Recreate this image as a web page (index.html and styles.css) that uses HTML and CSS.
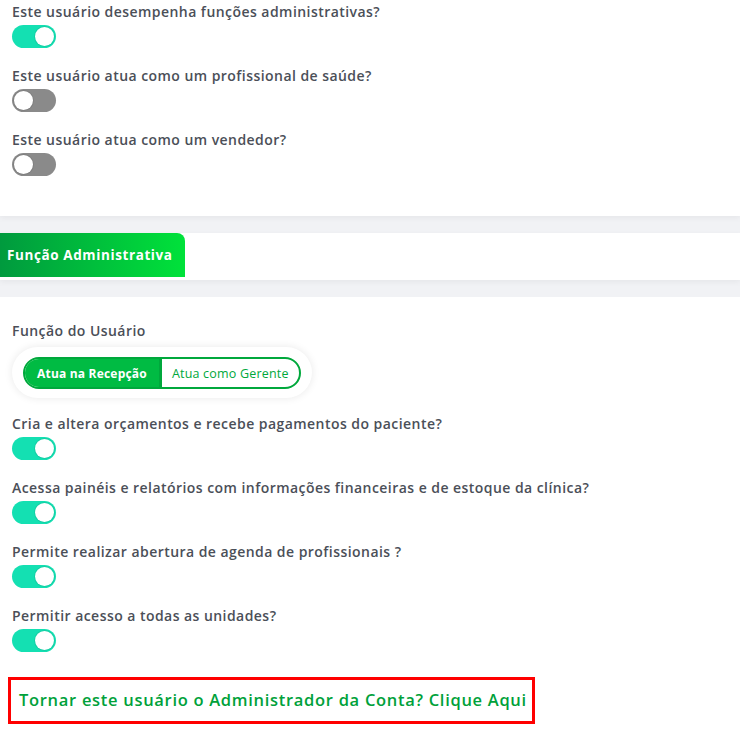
FILE: index.html
```html
<!DOCTYPE html>
<html lang="pt-BR">
<head>
  <meta charset="UTF-8" />
  <meta name="viewport" content="width=device-width, initial-scale=1.0"/>
  <title>Permissões do Usuário</title>
  <link rel="stylesheet" href="styles.css">
</head>
<body>
  <div class="card card-top">
    <div class="field">
      <div class="label">Este usuário desempenha funções administrativas?</div>
      <span class="switch on"></span>
    </div>
    <div class="field">
      <div class="label">Este usuário atua como um profissional de saúde?</div>
      <span class="switch"></span>
    </div>
    <div class="field">
      <div class="label">Este usuário atua como um vendedor?</div>
      <span class="switch"></span>
    </div>
  </div>

  <div class="tabbar">
    <div class="tab">Função Administrativa</div>
  </div>

  <div class="card card-main">
    <div class="label">Função do Usuário</div>
    <div class="segment-wrap">
      <div class="segment">
        <span class="seg active">Atua na Recepção</span>
        <span class="seg">Atua como Gerente</span>
      </div>
    </div>

    <div class="field">
      <div class="label">Cria e altera orçamentos e recebe pagamentos do paciente?</div>
      <span class="switch on"></span>
    </div>
    <div class="field">
      <div class="label">Acessa painéis e relatórios com informações financeiras e de estoque da clínica?</div>
      <span class="switch on"></span>
    </div>
    <div class="field">
      <div class="label">Permite realizar abertura de agenda de profissionais ?</div>
      <span class="switch on"></span>
    </div>
    <div class="field">
      <div class="label">Permitir acesso a todas as unidades?</div>
      <span class="switch on"></span>
    </div>

    <div class="admin-link">Tornar este usuário o Administrador da Conta? Clique Aqui</div>
  </div>
</body>
</html>
```

FILE: styles.css
```css
body {
  margin: 0;
  background: #f1f2f5;
  font-family: "Open Sans", Arial, sans-serif;
  color: #4b4f58;
}
.card {
  background: #fff;
  padding: 0 12px;
}
.card-top {
  height: 214px;
  padding-top: 2px;
  box-shadow: 0 2px 6px rgba(0, 0, 0, 0.05);
}
.field {
  margin-bottom: 18px;
}
.label {
  font-size: 14px;
  font-weight: 600;
  line-height: 20px;
  letter-spacing: 0.45px;
}
.switch {
  display: block;
  position: relative;
  width: 44px;
  height: 23px;
  margin-top: 3px;
  border-radius: 12px;
  background: #8a8a8a;
}
.switch::after {
  content: "";
  position: absolute;
  top: 2px;
  left: 2px;
  width: 19px;
  height: 19px;
  border-radius: 50%;
  background: #fff;
  box-shadow: 0 0 0 1px rgba(0, 0, 0, 0.08);
}
.switch.on {
  background: #14e0b2;
}
.switch.on::after {
  left: 23px;
}
.tabbar {
  margin-top: 17px;
  height: 47px;
  background: #fff;
  box-shadow: 0 2px 6px rgba(0, 0, 0, 0.05);
}
.tab {
  width: 178px;
  height: 44px;
  padding-left: 7px;
  display: flex;
  align-items: center;
  background: linear-gradient(90deg, #009a3e, #00e23a);
  border-top-right-radius: 8px;
  color: #fff;
  font-size: 13.5px;
  font-weight: 700;
  letter-spacing: 0.6px;
}
.card-main {
  margin-top: 17px;
  padding-top: 24px;
  padding-bottom: 40px;
}
.segment-wrap {
  display: inline-flex;
  margin: 6px 0 16px;
  padding: 10px 11px 9px;
  border-radius: 26px;
  background: #fff;
  box-shadow: 0 0 8px rgba(0, 0, 0, 0.09);
}
.segment {
  display: flex;
  height: 32px;
  border: 2px solid #00a83c;
  border-radius: 16px;
  overflow: hidden;
  box-sizing: border-box;
}
.seg {
  display: flex;
  align-items: center;
  padding: 0 10px;
  font-size: 12.5px;
  letter-spacing: 0.2px;
  color: #00a83c;
}
.seg.active {
  padding: 0 12px;
  background: #00bb43;
  color: #fff;
  font-weight: 700;
  font-size: 12px;
  border-right: 3px solid #00a83c;
}
.admin-link {
  margin: 25px 0 0 -4px;
  width: 505px;
  padding: 10px 8px 11px;
  border: 3px solid #ff0000;
  color: #00a13a;
  font-size: 16.5px;
  font-weight: 600;
  line-height: 20px;
  letter-spacing: 0.7px;
  white-space: nowrap;
}
```
